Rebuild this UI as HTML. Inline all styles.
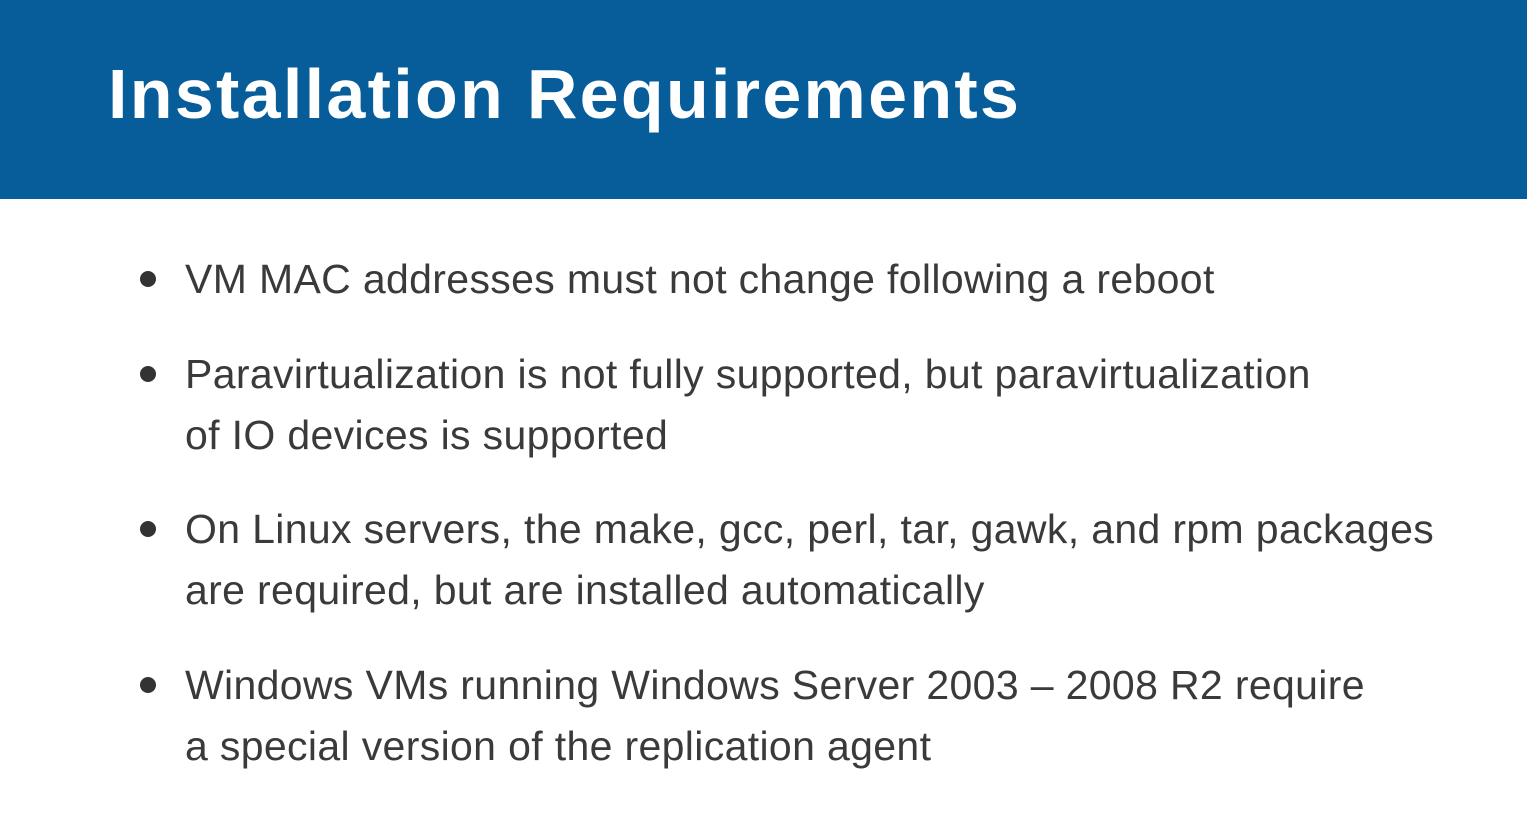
<!DOCTYPE html>
<html><head><meta charset="utf-8"><style>
body{margin:0;width:1527px;height:818px;background:#fff;overflow:hidden;position:relative;font-family:"Liberation Sans",sans-serif}
.hdr{position:absolute;left:0;top:0;width:1527px;height:199px;background:#075c9a}
.t{position:absolute;left:108px;top:54px;color:#fff;font-weight:bold;font-size:70px;letter-spacing:2.3px;white-space:nowrap}
.l{position:absolute;left:185px;color:#3a3a3a;font-size:41px;white-space:nowrap;letter-spacing:0.35px}
.b{position:absolute;left:140px;width:16px;height:16px;border-radius:50%;background:#333}
</style></head><body>
<div class="hdr"><div class="t">Installation Requirements</div></div>
<div class="b" style="top:271px"></div><div class="l" style="top:256px">VM MAC addresses must not change following a reboot</div>
<div class="b" style="top:366px"></div><div class="l" style="top:351px">Paravirtualization is not fully supported, but paravirtualization</div>
<div class="l" style="top:412px">of IO devices is supported</div>
<div class="b" style="top:521px"></div><div class="l" style="top:506px">On Linux servers, the make, gcc, perl, tar, gawk, and rpm packages</div>
<div class="l" style="top:567px">are required, but are installed automatically</div>
<div class="b" style="top:677px"></div><div class="l" style="top:662px">Windows VMs running Windows Server 2003 – 2008 R2 require</div>
<div class="l" style="top:723px">a special version of the replication agent</div>
</body></html>
